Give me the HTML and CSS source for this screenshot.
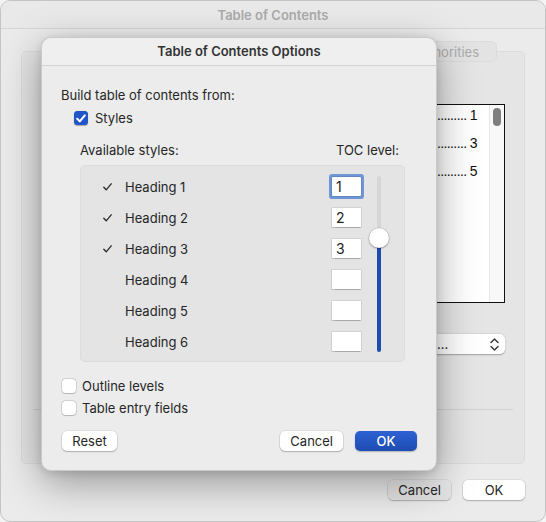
FILE: index.html
```html
<!DOCTYPE html>
<html>
<head>
<meta charset="utf-8">
<link rel="stylesheet" href="styles.css">
</head>
<body>
<div class="win">
  <div class="win-title">Table of Contents</div>
  <div class="win-body">
    <div class="tabs"><span class="tab">Table of Authorities</span></div>
    <div class="group">
      <div class="preview-row">
        <div class="preview">
          <div class="pv-lines">
            <div class="pv-line"><span>............... 1</span></div>
            <div class="pv-line"><span>............... 3</span></div>
            <div class="pv-line"><span>............... 5</span></div>
          </div>
          <div class="pv-scroll"><div class="pv-thumb"></div></div>
        </div>
      </div>
      <div class="dd-row">
        <div class="dropdown">
          <span class="dd-text">…</span>
          <svg class="dd-chev" width="9" height="13" viewBox="0 0 9 13"><path d="M1 4.5 L4.5 1 L8 4.5 M1 8.5 L4.5 12 L8 8.5" fill="none" stroke="#333" stroke-width="1.4" stroke-linecap="round" stroke-linejoin="round"/></svg>
        </div>
      </div>
      <div class="sep"></div>
    </div>
    <div class="win-buttons">
      <button class="btn btn-gray">Cancel</button>
      <button class="btn">OK</button>
    </div>
  </div>

  <div class="dialog">
    <div class="dlg-title">Table of Contents Options</div>
    <div class="dlg-body">
      <div class="line">Build table of contents from:</div>
      <div class="cb-row cb-styles">
        <span class="cb cb-on"><svg width="10" height="9" viewBox="0 0 10 9"><path d="M1.2 4.8 L3.8 7.4 L8.8 1.4" fill="none" stroke="#fff" stroke-width="2" stroke-linecap="round" stroke-linejoin="round"/></svg></span>
        <span>Styles</span>
      </div>
      <div class="styles-sec">
        <div class="labels"><span>Available styles:</span><span>TOC level:</span></div>
        <div class="panel">
          <div class="list">
            <div class="row"><span class="mark"><svg width="9" height="8" viewBox="0 0 9 8"><path d="M0.8 4.2 L3.2 6.8 L8.2 0.8" fill="none" stroke="#2a2a2a" stroke-width="1.3" stroke-linecap="round" stroke-linejoin="round"/></svg></span><span class="name">Heading 1</span><span class="lvl focus">1</span></div>
            <div class="row"><span class="mark"><svg width="9" height="8" viewBox="0 0 9 8"><path d="M0.8 4.2 L3.2 6.8 L8.2 0.8" fill="none" stroke="#2a2a2a" stroke-width="1.3" stroke-linecap="round" stroke-linejoin="round"/></svg></span><span class="name">Heading 2</span><span class="lvl">2</span></div>
            <div class="row"><span class="mark"><svg width="9" height="8" viewBox="0 0 9 8"><path d="M0.8 4.2 L3.2 6.8 L8.2 0.8" fill="none" stroke="#2a2a2a" stroke-width="1.3" stroke-linecap="round" stroke-linejoin="round"/></svg></span><span class="name">Heading 3</span><span class="lvl">3</span></div>
            <div class="row"><span class="mark"></span><span class="name">Heading 4</span><span class="lvl"></span></div>
            <div class="row"><span class="mark"></span><span class="name">Heading 5</span><span class="lvl"></span></div>
            <div class="row"><span class="mark"></span><span class="name">Heading 6</span><span class="lvl"></span></div>
          </div>
          <div class="slider-col">
            <div class="slider">
              <div class="trk-top"></div>
              <div class="trk-bot"></div>
              <div class="thumb"></div>
            </div>
          </div>
        </div>
      </div>
      <div class="cb-row cb-outline">
        <span class="cb"></span><span>Outline levels</span>
      </div>
      <div class="cb-row cb-entry">
        <span class="cb"></span><span>Table entry fields</span>
      </div>
      <div class="dlg-buttons">
        <button class="btn btn-reset">Reset</button>
        <span class="spacer"></span>
        <button class="btn">Cancel</button>
        <button class="btn btn-blue">OK</button>
      </div>
    </div>
  </div>
</div>
</body>
</html>
```

FILE: styles.css
```css
* { box-sizing: border-box; }
html, body { margin: 0; padding: 0; }
body {
  background: #f4f4f4;
  font-family: "Inter", "Noto Sans", sans-serif;
  font-size: 13px;
  color: #262626;
}
.win {
  position: relative;
  width: 546px;
  height: 522px;
  border: 1px solid #c4c4c4;
  border-radius: 10px;
  background: #ebebeb;
  overflow: hidden;
}
.win-title {
  height: 28px;
  line-height: 28px;
  text-align: center;
  font-weight: 600;
  color: #ababab;
  border-bottom: 1px solid #d6d6d6;
  background: #e9e9e9;
}
.win-body {
  padding: 12px 20px 0 20px;
}
.tabs {
  display: flex;
  justify-content: flex-end;
  padding-right: 28px;
  margin-bottom: -11px;
  position: relative;
  z-index: 1;
}
.tab {
  height: 21px;
  line-height: 20px;
  padding: 0 17px 0 10px;
  border: 1px solid #dcdcdc;
  border-radius: 6px;
  background: #e3e3e3;
  color: #ababab;
}
.group {
  height: 413px;
  border: 1px solid #dcdcdc;
  border-radius: 5px;
  background: #e5e5e5;
  padding-top: 52px;
}
.preview-row { display: flex; justify-content: flex-end; padding-right: 19px; }
.preview {
  width: 90px;
  height: 199px;
  border: 1px solid #111;
  background: #fff;
  display: flex;
}
.pv-lines {
  flex: 1;
  min-width: 0;
  padding-right: 12px;
  overflow: hidden;
}
.pv-line {
  display: flex;
  justify-content: flex-end;
  height: 20px;
  line-height: 20px;
  margin-bottom: 8px;
  white-space: nowrap;
  font-family: "Liberation Sans", sans-serif;
  font-size: 14px;
  color: #111;
  letter-spacing: -0.6px;
}
.pv-line span { flex: none; }
.pv-scroll {
  width: 15px;
  flex: none;
  background: #f8f8f8;
  border-left: 1px solid #e6e6e6;
  padding: 3px 0 0 3px;
}
.pv-thumb {
  width: 8px;
  height: 18px;
  border-radius: 4px;
  background: #7e7e7e;
}
.dd-row { display: flex; justify-content: flex-end; padding-right: 19px; margin-top: 31px; }
.dropdown {
  width: 80px;
  height: 20px;
  background: #fff;
  border-radius: 5px;
  box-shadow: 0 0.5px 1.5px rgba(0,0,0,0.3);
  display: flex;
  align-items: center;
  padding: 0 6px 0 12px;
}
.dd-text { flex: 1; }
.dd-chev { display: block; flex: none; }
.sep {
  height: 1px;
  background: #d2d2d2;
  margin: 55px 11px 0 11px;
}
.win-buttons {
  display: flex;
  justify-content: flex-end;
  gap: 12px;
  margin-top: 16px;
}
.btn {
  font-family: inherit;
  font-size: 13px;
  color: #262626;
  height: 20px;
  min-width: 62px;
  padding: 0 10px;
  border: none;
  border-radius: 5px;
  background: #fff;
  box-shadow: 0 0 0 0.5px rgba(0,0,0,0.12), 0 1px 1.5px rgba(0,0,0,0.22);
  line-height: 20px;
}
.btn-gray { background: linear-gradient(#ebebeb, #e2e2e2); }
.btn-blue {
  background: linear-gradient(#2e62d4, #1d4cb0);
  color: #fff;
  font-weight: 500;
  box-shadow: 0 1px 1.5px rgba(0,0,0,0.25);
}
.btn-reset { min-width: 55px; }

.dialog {
  position: absolute;
  left: 40px;
  top: 36px;
  width: 396px;
  height: 434px;
  background: #ececec;
  border: 1px solid #cacaca;
  border-radius: 10px;
  box-shadow: 0 12px 40px rgba(0,0,0,0.36), 0 2px 8px rgba(0,0,0,0.12);
  z-index: 5;
}
.dlg-title {
  height: 28px;
  line-height: 27px;
  text-align: center;
  font-weight: 600;
  color: #333;
  border-bottom: 1px solid #d3d3d3;
  background: #efefef;
  border-radius: 10px 10px 0 0;
}
.dlg-body {
  padding: 21px 19px 0 19px;
}
.line { height: 16px; line-height: 16px; }
.cb-row {
  display: flex;
  align-items: center;
  gap: 7px;
  height: 16px;
  line-height: 16px;
}
.cb-styles { margin-top: 7px; padding-left: 13px; }
.cb {
  width: 14px;
  height: 14px;
  border-radius: 3.5px;
  background: #fff;
  box-shadow: 0 0 0 0.5px rgba(0,0,0,0.2), 0 0.5px 1px rgba(0,0,0,0.15);
  display: flex;
  align-items: center;
  justify-content: center;
}
.cb-on { background: #1f55c6; box-shadow: 0 0.5px 1px rgba(0,0,0,0.3); }
.cb-on svg { display: block; }
.styles-sec { margin: 16px 12px 0 19px; }
.labels {
  display: flex;
  justify-content: space-between;
  height: 16px;
  line-height: 16px;
  padding-right: 6px;
}
.panel {
  margin-top: 7px;
  height: 197px;
  background: #e4e4e4;
  border: 1px solid #dcdcdc;
  border-radius: 5px;
  display: flex;
}
.list { width: 280px; padding-top: 5px; }
.row {
  display: flex;
  align-items: center;
  height: 31px;
}
.mark { width: 44px; padding-left: 22px; display: flex; align-items: center; }
.mark svg { display: block; }
.name { flex: 1; }
.lvl {
  width: 29px;
  height: 19px;
  background: #fff;
  box-shadow: 0 0 0 0.5px rgba(0,0,0,0.15), 0 0.5px 1px rgba(0,0,0,0.2);
  padding-left: 4px;
  line-height: 19px;
  font-size: 14px;
  color: #222;
}
.lvl.focus {
  box-shadow: 0 0 0 0.5px rgba(0,0,0,0.2), 0 0 0 3px #7196d6;
  border-radius: 1px;
}
.slider-col { width: 36px; display: flex; justify-content: center; padding-top: 10px; }
.slider {
  position: relative;
  width: 4px;
  height: 176px;
  display: flex;
  flex-direction: column;
}
.trk-top { height: 62px; background: #d6d6d6; border-radius: 2px 2px 0 0; }
.trk-bot { flex: 1; background: #1d4cb0; border-radius: 0 0 2px 2px; }
.thumb {
  position: absolute;
  left: -8px;
  top: 52px;
  width: 20px;
  height: 20px;
  border-radius: 50%;
  background: #fff;
  box-shadow: 0 0 0 0.5px rgba(0,0,0,0.15), 0 1px 2px rgba(0,0,0,0.3);
}
.cb-outline { margin-top: 16px; padding-left: 1px; gap: 6px; }
.cb-entry { margin-top: 6px; padding-left: 1px; gap: 6px; }
.dlg-buttons {
  display: flex;
  align-items: center;
  gap: 12px;
  margin-top: 15px;
  padding-left: 1px;
}
.spacer { flex: 1; }
```
